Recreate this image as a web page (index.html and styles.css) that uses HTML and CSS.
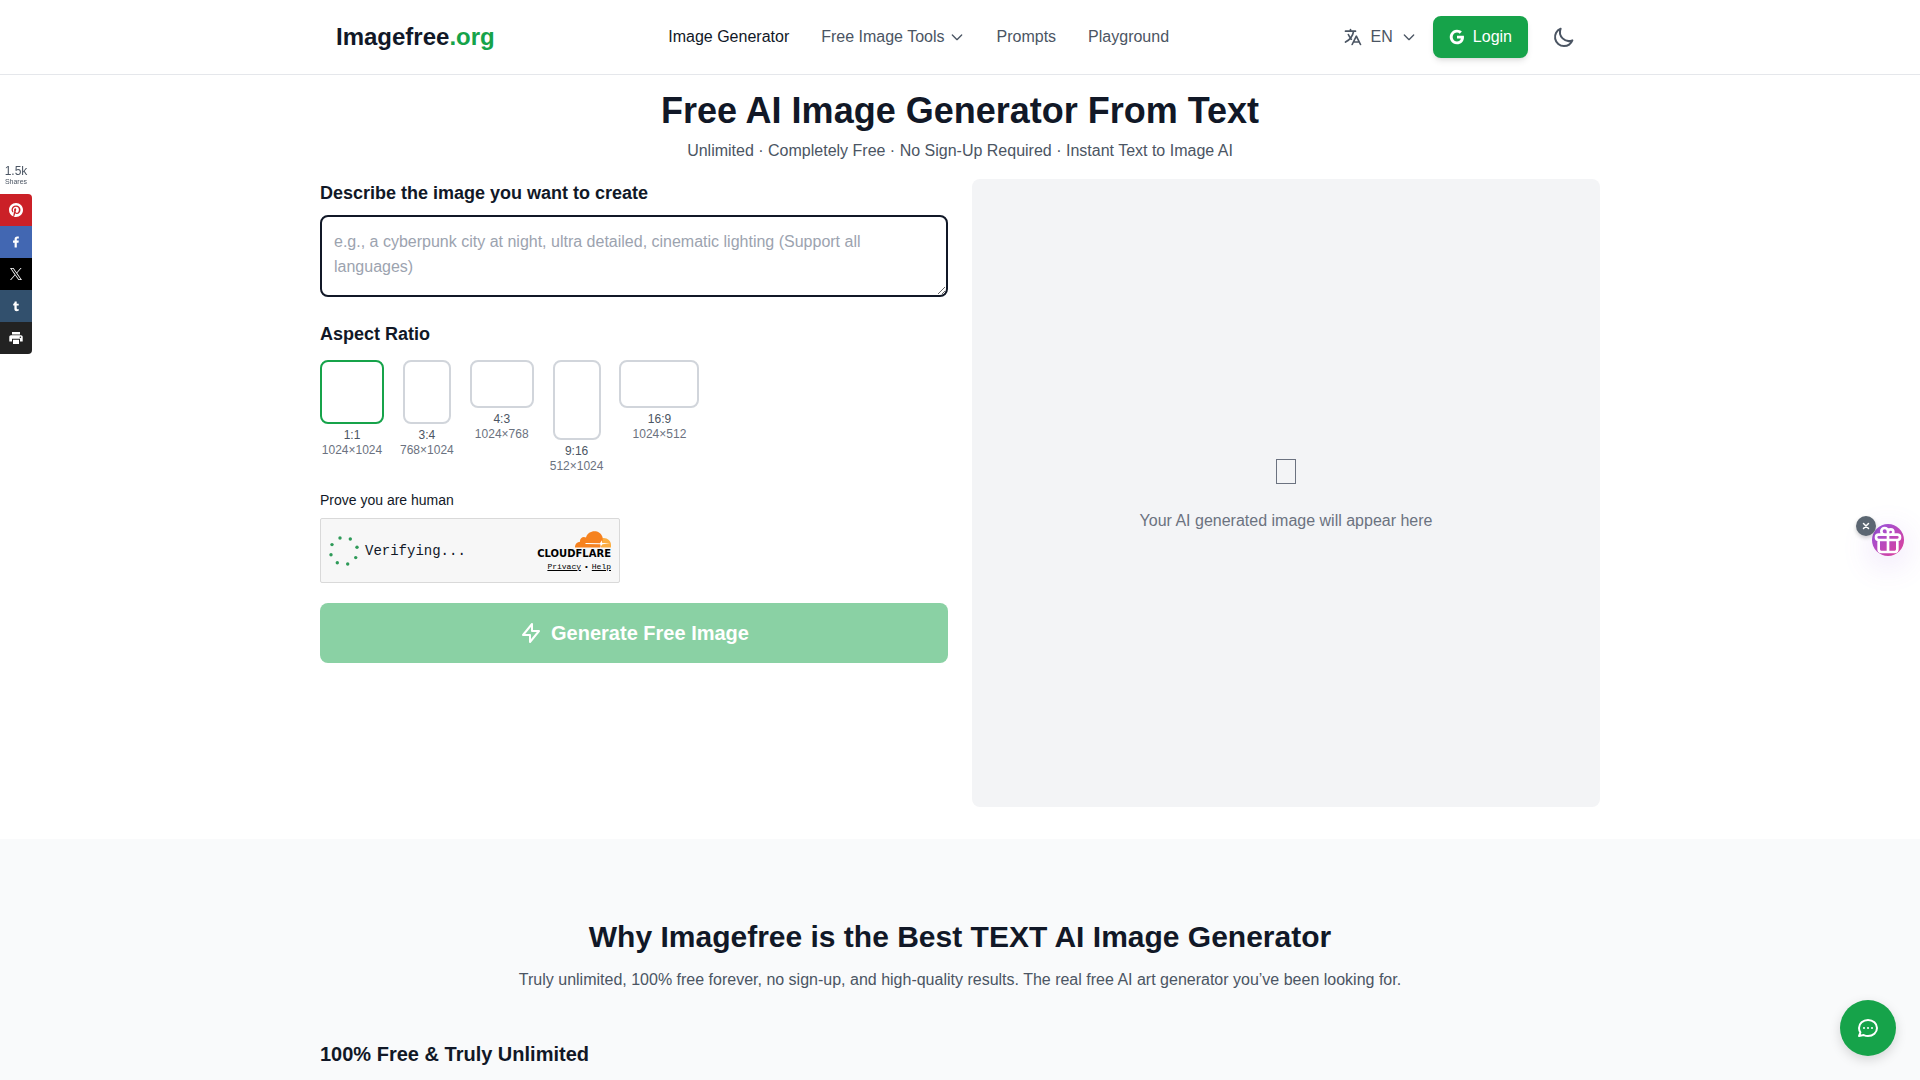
FILE: index.html
```html
<!DOCTYPE html>
<html lang="en">
<head>
  <meta charset="utf-8">
  <meta name="viewport" content="width=device-width, initial-scale=1">
  <title>Free AI Image Generator From Text</title>
  <link rel="stylesheet" href="styles.css">
</head>
<body>
  <header class="header">
    <div class="container header-inner">
      <a class="logo" href="#">Imagefree<span class="logo-tld">.org</span></a>

      <nav class="nav">
        <a class="active" href="#">Image Generator</a>
        <button class="nav-drop">Free Image Tools
          <svg class="line" width="16" height="16" viewBox="0 0 24 24"><path d="M19 9l-7 7-7-7"/></svg>
        </button>
        <a href="#">Prompts</a>
        <a href="#">Playground</a>
      </nav>

      <div class="actions">
        <button class="lang">
          <svg class="line" width="20" height="20" viewBox="0 0 24 24"><path d="M3 5h12M9 3v2m1.048 9.5A18.022 18.022 0 016.412 9m6.088 9h7M11 21l5-10 5 10M12.751 5C11.783 10.77 8.07 15.61 3 18.129"/></svg>
          EN
          <svg class="line" width="16" height="16" viewBox="0 0 24 24"><path d="M19 9l-7 7-7-7"/></svg>
        </button>
        <button class="login">
          <svg width="16" height="16" viewBox="1 1 22 22" fill="currentColor"><path d="M3.06364 7.50914C4.70909 4.24092 8.09084 2 12 2C14.6954 2 16.959 2.99095 18.6909 4.60455L15.8227 7.47274C14.7864 6.48185 13.4681 5.97727 12 5.97727C9.39542 5.97727 7.19084 7.73637 6.40455 10.1C6.2045 10.7 6.09086 11.3409 6.09086 12C6.09086 12.6591 6.2045 13.3 6.40455 13.9C7.19084 16.2636 9.39542 18.0227 12 18.0227C13.3454 18.0227 14.4909 17.6682 15.3864 17.0682C16.4454 16.3591 17.15 15.3 17.3818 14.05H12V10.1818H21.4181C21.5364 10.8363 21.6 11.5182 21.6 12.2273C21.6 15.2727 20.5091 17.8363 18.6181 19.5773C16.9636 21.1045 14.7 22 12 22C8.09084 22 4.70909 19.7591 3.06364 16.4909C2.38638 15.1409 2 13.6136 2 12C2 10.3864 2.38638 8.85911 3.06364 7.50914Z"/></svg>
          Login
        </button>
        <button class="theme" aria-label="Toggle dark mode">
          <svg class="line" width="24" height="24" viewBox="0 0 24 24"><path d="M20.354 15.354A9 9 0 018.646 3.646 9.003 9.003 0 0012 21a9.003 9.003 0 008.354-5.646z"/></svg>
        </button>
      </div>
    </div>
  </header>

  <main class="main">
    <div class="container hero">
      <h1>Free AI Image Generator From Text</h1>
      <p class="tagline">Unlimited · Completely Free · No Sign-Up Required · Instant Text to Image AI</p>

      <div class="generator">
        <form class="form" onsubmit="return false">
          <label class="field-title" for="prompt">Describe the image you want to create</label>
          <textarea class="prompt" id="prompt" placeholder="e.g., a cyberpunk city at night, ultra detailed, cinematic lighting (Support all languages)"></textarea>

          <fieldset class="ratios">
            <legend class="field-title">Aspect Ratio</legend>
            <div class="ratio-list">
              <label class="ratio"><input class="box square" type="radio" name="ratio" checked><span>1:1</span><span class="size">1024×1024</span></label>
              <label class="ratio"><input class="box portrait" type="radio" name="ratio"><span>3:4</span><span class="size">768×1024</span></label>
              <label class="ratio"><input class="box landscape" type="radio" name="ratio"><span>4:3</span><span class="size">1024×768</span></label>
              <label class="ratio"><input class="box tall" type="radio" name="ratio"><span>9:16</span><span class="size">512×1024</span></label>
              <label class="ratio"><input class="box wide" type="radio" name="ratio"><span>16:9</span><span class="size">1024×512</span></label>
            </div>
          </fieldset>

          <p class="human">Prove you are human</p>
          <div class="captcha">
            <svg width="30" height="30" viewBox="0 0 30 30" fill="#2e9a58">
              <circle cx="11" cy="2" r="1.7"/><circle cx="21.3" cy="3" r="1.7"/><circle cx="28" cy="11.3" r="1.7"/><circle cx="26.7" cy="21.6" r="1.7"/><circle cx="18.7" cy="28" r="1.7"/><circle cx="8.3" cy="26.7" r="1.7"/><circle cx="2" cy="18.7" r="1.7"/><circle cx="3" cy="8.6" r="1.7"/>
            </svg>
            <span class="captcha-state">Verifying...</span>
            <div class="captcha-brand">
              <svg width="36" height="17" viewBox="0 0 36 17">
                <path fill="#fbad41" d="M26 16.500V13l1-5.700C31.500 6.200 36 9.500 36 14v2.500z"/>
                <path fill="#f6821f" d="M0 16.500c-.2-3.500 1.800-5.500 5-5.800C4.600 7.200 8 4.800 11 6.500 13-1.500 25-2.200 27.500 6c.6 2.500-.2 5-1 7l-1.300 3.500z"/>
                <path fill="#fff" d="M10.500 12l14.500.2 1.700-3 .5 2.800 7.800.3-7.500 1-1.700 2-.6-2-14.700-.3z"/>
              </svg>
              <span class="captcha-name">CLOUDFLARE</span>
              <div class="captcha-links"><a href="#">Privacy</a><span>•</span><a href="#">Help</a></div>
            </div>
          </div>

          <button class="generate" disabled>
            <svg class="line" width="24" height="24" viewBox="0 0 24 24"><path d="M13 10V3L4 14h7v7l9-11h-7z"/></svg>
            Generate Free Image
          </button>
        </form>

        <div class="preview">
          <span class="preview-icon"></span>
          <p>Your AI generated image will appear here</p>
        </div>
      </div>
    </div>
  </main>

  <section class="why">
    <div class="container">
      <h2>Why Imagefree is the Best TEXT AI Image Generator</h2>
      <p class="why-text">Truly unlimited, 100% free forever, no sign-up, and high-quality results. The real free AI art generator you’ve been looking for.</p>
      <h3>100% Free &amp; Truly Unlimited</h3>
    </div>
  </section>

  <aside class="share">
    <div class="share-count">1.5k<small>Shares</small></div>
    <a class="pinterest" href="#" aria-label="Pinterest">
      <svg width="14" height="14" viewBox="0 0 24 24" fill="#fff"><path d="M12 0C5.373 0 0 5.373 0 12c0 5.084 3.163 9.426 7.627 11.174-.105-.949-.2-2.405.042-3.441.218-.937 1.407-5.965 1.407-5.965s-.359-.719-.359-1.782c0-1.668.967-2.914 2.171-2.914 1.023 0 1.518.769 1.518 1.69 0 1.029-.655 2.568-.994 3.995-.283 1.194.599 2.169 1.777 2.169 2.133 0 3.772-2.249 3.772-5.495 0-2.873-2.064-4.882-5.012-4.882-3.414 0-5.418 2.561-5.418 5.207 0 1.031.397 2.138.893 2.738.098.119.112.224.083.345l-.333 1.36c-.053.22-.174.267-.402.161-1.499-.698-2.436-2.889-2.436-4.649 0-3.785 2.75-7.262 7.929-7.262 4.163 0 7.398 2.967 7.398 6.931 0 4.136-2.607 7.464-6.227 7.464-1.216 0-2.359-.631-2.75-1.378l-.748 2.853c-.271 1.043-1.002 2.35-1.492 3.146C9.57 23.812 10.763 24 12 24c6.627 0 12-5.373 12-12S18.627 0 12 0z"/></svg>
    </a>
    <a class="facebook" href="#" aria-label="Facebook">
      <svg width="16" height="16" viewBox="0 0 16 16" fill="#fff"><path d="M6.600 13.500V8.700H5V6.600h1.600V5.200c0-1.900 1-2.700 2.600-2.700h1.600v2H9.700c-.8 0-.9.3-.9 1v1.100h2L10.500 8.700H8.800v4.800z"/></svg>
    </a>
    <a class="twitter" href="#" aria-label="X">
      <svg width="12" height="12" viewBox="0 0 24 24" fill="#fff"><path d="M14.258 10.152 23.176 0h-2.113l-7.747 8.813L7.133 0H0l9.352 13.328L0 23.973h2.113l8.176-9.309 6.531 9.309h7.133zm-2.895 3.293-.949-1.328L2.875 1.560h3.246l6.086 8.523.945 1.328 7.910 11.078h-3.246z"/></svg>
    </a>
    <a class="tumblr" href="#" aria-label="Tumblr">
      <svg width="16" height="16" viewBox="0 0 16 16" fill="#fff"><path d="M6.700 3.500h2v2.300h2v1.800h-2v2.700c0 1.100.9 1.200 2 .7v1.800c-2.300 1-4.300.3-4.300-1.800V7.600H5.200V6c1-.4 1.400-1.200 1.500-2.500z"/></svg>
    </a>
    <a class="print" href="#" aria-label="Print">
      <svg width="16" height="16" viewBox="0 0 16 16"><path fill="#fff" d="M4 2h8v2.500H4zM3 5.300h10c1 0 1.700.8 1.700 1.700v4.500H12V8.800H4v2.700H1.300V7c0-.9.7-1.700 1.700-1.700zM5 9.800h6V14H5z"/><circle cx="12.400" cy="7.200" r=".8" fill="#222"/></svg>
    </a>
  </aside>

  <div class="gift">
    <button class="gift-open" aria-label="Open gift">
      <svg class="line" width="32" height="32" viewBox="0 0 24 24"><path d="M12 8v13m0-13V6a2 2 0 112 2h-2zm0 0V5.500A2.500 2.500 0 109.500 8H12zm-7 4h14M5 12a2 2 0 110-4h14a2 2 0 110 4M5 12v7a2 2 0 002 2h10a2 2 0 002-2v-7"/></svg>
    </button>
    <button class="gift-close" aria-label="Close">
      <svg width="8" height="8" viewBox="0 0 8 8" stroke="#fff" stroke-width="1.500" stroke-linecap="round"><path d="M1.500 1.500l5 5M6.500 1.500l-5 5"/></svg>
    </button>
  </div>

  <button class="chat" aria-label="Chat">
    <svg class="line" width="24" height="24" viewBox="0 0 24 24"><path d="M8 12h.01M12 12h.01M16 12h.01M21 12c0 4.418-4.030 8-9 8a9.863 9.863 0 01-4.255-.949L3 20l1.395-3.720C3.512 15.042 3 13.574 3 12c0-4.418 4.030-8 9-8s9 3.582 9 8z"/></svg>
  </button>
</body>
</html>
```
FILE: styles.css
```css
* { box-sizing: border-box; }
body { margin: 0; min-height: 100vh; display: flex; flex-direction: column; font-family: "Liberation Sans", Arial, sans-serif; font-size: 16px; line-height: 24px; color: #111827; background: #fff; }
h1, h2, h3, p { margin: 0; }
a { color: inherit; text-decoration: none; }
button { font: inherit; color: inherit; border: 0; padding: 0; background: none; cursor: pointer; }
svg { display: block; flex-shrink: 0; }
.line { fill: none; stroke: currentColor; stroke-width: 2; stroke-linecap: round; stroke-linejoin: round; }
.container { width: 100%; max-width: 1280px; margin: 0 auto; }

/* header */
.header { border-bottom: 1px solid #e5e7eb; }
.header-inner { display: flex; align-items: center; justify-content: space-between; padding: 16px; }
.logo { font-size: 24px; font-weight: bold; line-height: 32px; }
.logo-tld { color: #16a34a; }
.nav { display: flex; gap: 32px; color: #4b5563; }
.nav .active { color: #111827; }
.nav-drop { display: flex; align-items: center; gap: 4px; }
.actions { display: flex; align-items: center; gap: 16px; color: #4b5563; }
.lang { display: flex; align-items: center; gap: 8px; }
.login { display: flex; align-items: center; gap: 8px; padding: 9px 16px; color: #fff; background: #16a34a; border-radius: 8px; box-shadow: 0 4px 6px -1px rgba(0, 0, 0, .1), 0 2px 4px -2px rgba(0, 0, 0, .1); }
.theme { padding: 8px; }

/* generator */
.hero { padding: 16px 0 32px; }
h1 { font-size: 36px; line-height: 40px; text-align: center; }
.tagline { margin: 8px 0 16px; text-align: center; color: #4b5563; }
.generator { display: grid; grid-template-columns: 1fr 1fr; gap: 24px; }
.form { display: flex; flex-direction: column; }
.field-title { padding: 0; font-size: 18px; font-weight: bold; line-height: 28px; }
.prompt { width: 100%; height: 82px; margin-top: 8px; padding: 12px; font: inherit; line-height: 25px; color: #111827; border: 2px solid #111827; border-radius: 8px; outline: none; resize: vertical; }
.prompt::placeholder { color: #9ca3af; }
.ratios { margin: 23px 0 0; padding: 0; border: 0; }
.ratio-list { display: flex; align-items: flex-start; gap: 16px; margin-top: 12px; }
.ratio { display: flex; flex-direction: column; align-items: center; font-size: 12px; line-height: 15px; color: #4b5563; cursor: pointer; }
.size { color: #6b7280; }
.box { appearance: none; margin: 0 0 4px; border: 2px solid #d1d5db; border-radius: 8px; }
.box:checked { border-color: #16a34a; }
.square { width: 64px; height: 64px; }
.portrait { width: 48px; height: 64px; }
.landscape { width: 64px; height: 48px; }
.tall { width: 48px; height: 80px; }
.wide { width: 80px; height: 48px; }
.human { margin: 16px 0 8px; font-size: 14px; line-height: 20px; }

/* captcha */
.captcha { display: flex; align-items: center; width: 300px; max-width: 100%; height: 65px; padding: 0 8px; background: #f7f7f7; border: 1px solid #d9d9d9; border-radius: 2px; }
.captcha-state { margin-left: 6px; font-family: "Liberation Mono", monospace; font-size: 14px; }
.captcha-brand { display: flex; flex-direction: column; align-items: flex-end; margin-left: auto; padding-top: 2px; color: #000; }
.captcha-name { font-family: "DejaVu Sans", sans-serif; font-size: 10px; font-weight: bold; line-height: 12px; }
.captcha-links { display: flex; gap: 3px; font-family: "Liberation Mono", monospace; font-size: 8px; line-height: 13px; }
.captcha-links a { text-decoration: underline; }

.generate { display: flex; align-items: center; justify-content: center; gap: 8px; height: 60px; margin-top: 20px; font-size: 20px; font-weight: bold; color: #fff; background: #8ad1a4; border-radius: 8px; cursor: not-allowed; }
.preview { display: flex; flex-direction: column; align-items: center; justify-content: center; gap: 16px; aspect-ratio: 1; color: #6b7280; background: #f3f4f6; border-radius: 8px; }
.preview-icon { width: 20px; height: 25px; margin: 6px 0 9px; border: 1px solid #6b7280; }

/* why */
.why { flex: 1; padding: 80px 0 8px; background: #f9fafb; }
h2 { font-size: 30px; line-height: 36px; text-align: center; }
.why-text { margin: 13px 0 48px; text-align: center; color: #4b5563; }
h3 { font-size: 20px; line-height: 28px; }

/* share bar */
.share { position: fixed; left: 0; top: 162px; width: 32px; }
.share-count { display: flex; flex-direction: column; height: 32px; font-size: 12px; line-height: 18px; text-align: center; color: #4b5563; }
.share-count small { font-size: 7px; line-height: 4px; }
.share a { display: flex; align-items: center; justify-content: center; height: 32px; }
.pinterest { background: #cb2027; border-top-right-radius: 4px; }
.facebook { background: #4267b2; }
.twitter { background: #000; }
.tumblr { background: #32506d; }
.print { background: #222; border-bottom-right-radius: 4px; }

/* floating buttons */
.gift { position: fixed; right: 16px; top: 524px; }
.gift-open { display: block; width: 32px; height: 32px; overflow: hidden; color: #fff; border-radius: 50%; background: linear-gradient(135deg, #9353e0, #e03f97); box-shadow: 0 8px 32px rgba(147, 83, 224, .2); }
.gift-close { position: absolute; left: -16px; top: -8px; display: flex; align-items: center; justify-content: center; width: 20px; height: 20px; border-radius: 50%; background: #5b6672; box-shadow: 0 2px 4px rgba(0, 0, 0, .2); }
.chat { position: fixed; right: 24px; bottom: 24px; display: flex; align-items: center; justify-content: center; width: 56px; height: 56px; color: #fff; border-radius: 50%; background: #16a34a; box-shadow: 0 4px 12px rgba(0, 0, 0, .15); }
```
